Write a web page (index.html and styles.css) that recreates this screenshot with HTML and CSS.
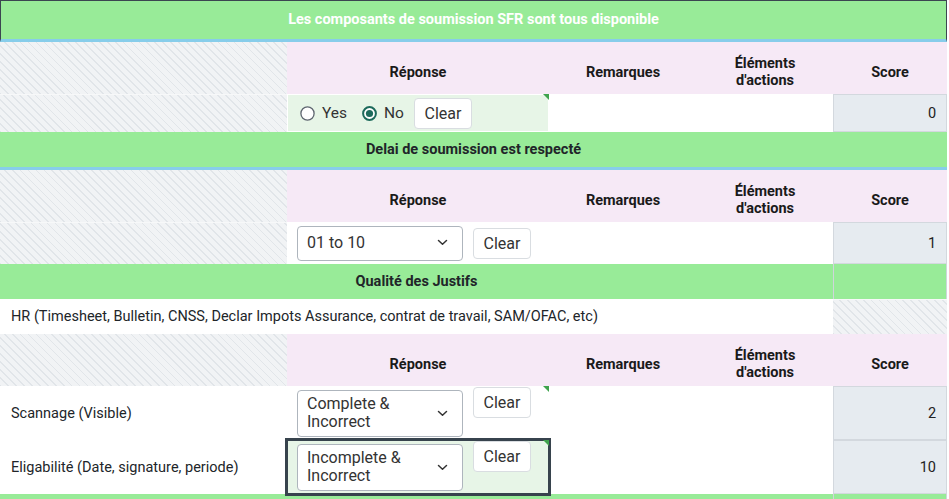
FILE: index.html
```html
<!DOCTYPE html>
<html lang="fr">
<head>
<meta charset="utf-8">
<title>Évaluation</title>
<link rel="stylesheet" href="styles.css">
</head>
<body>
<table class="grid">
  <colgroup>
    <col class="c1"><col class="c2"><col class="c3"><col class="c4"><col class="c5">
  </colgroup>
  <tbody>
    <tr class="r-top">
      <td colspan="5" class="sec sec-top">Les composants de soumission SFR sont tous disponible</td>
    </tr>
    <tr class="r-head">
      <td class="hatch"></td>
      <th>Réponse</th>
      <th>Remarques</th>
      <th>Éléments<br>d'actions</th>
      <th>Score</th>
    </tr>
    <tr class="r-yn">
      <td class="hatch"></td>
      <td class="resp filled flagged">
        <div class="ctrl ctrl-mid">
          <label class="radio">
            <svg width="15" height="15" viewBox="0 0 15 15"><circle cx="7.5" cy="7.5" r="6.6" fill="#fff" stroke="#5f6670" stroke-width="1.3"/></svg>
            <span>Yes</span>
          </label>
          <label class="radio radio-last">
            <svg width="15" height="15" viewBox="0 0 15 15"><circle cx="7.5" cy="7.5" r="6.4" fill="#fff" stroke="#1d6a5b" stroke-width="2"/><circle cx="7.5" cy="7.5" r="3.6" fill="#1d6a5b"/></svg>
            <span>No</span>
          </label>
          <button class="btn">Clear</button>
        </div>
      </td>
      <td></td>
      <td></td>
      <td class="score">0</td>
    </tr>
    <tr class="r-sec">
      <td colspan="5" class="sec sec-blue">Delai de soumission est respecté</td>
    </tr>
    <tr class="r-head">
      <td class="hatch"></td>
      <th>Réponse</th>
      <th>Remarques</th>
      <th>Éléments<br>d'actions</th>
      <th>Score</th>
    </tr>
    <tr class="r-data">
      <td class="hatch"></td>
      <td class="resp">
        <div class="ctrl ctrl-mid">
          <div class="select"><span class="sel-text">01 to 10</span><svg class="chev" width="11" height="7" viewBox="0 0 11 7"><path d="M1.5 1.5 L5.5 5.2 L9.5 1.5" fill="none" stroke="#333" stroke-width="1.5" stroke-linecap="round" stroke-linejoin="round"/></svg></div>
          <button class="btn">Clear</button>
        </div>
      </td>
      <td></td>
      <td></td>
      <td class="score">1</td>
    </tr>
    <tr class="r-sec3">
      <td colspan="4" class="sec">Qualité des Justifs</td>
      <td class="sec sec-score"></td>
    </tr>
    <tr class="r-hr">
      <td colspan="4" class="label">HR (Timesheet, Bulletin, CNSS, Declar Impots Assurance, contrat de travail, SAM/OFAC, etc)</td>
      <td class="hatch"></td>
    </tr>
    <tr class="r-head">
      <td class="hatch"></td>
      <th>Réponse</th>
      <th>Remarques</th>
      <th>Éléments<br>d'actions</th>
      <th>Score</th>
    </tr>
    <tr class="r-tall">
      <td class="label">Scannage (Visible)</td>
      <td class="resp flagged">
        <div class="ctrl ctrl-top">
          <div class="select"><span class="sel-text">Complete &amp; Incorrect</span><svg class="chev" width="11" height="7" viewBox="0 0 11 7"><path d="M1.5 1.5 L5.5 5.2 L9.5 1.5" fill="none" stroke="#333" stroke-width="1.5" stroke-linecap="round" stroke-linejoin="round"/></svg></div>
          <button class="btn">Clear</button>
        </div>
      </td>
      <td></td>
      <td></td>
      <td class="score">2</td>
    </tr>
    <tr class="r-tall2">
      <td class="label">Eligabilité (Date, signature, periode)</td>
      <td class="resp filled flagged focused">
        <div class="ctrl ctrl-top">
          <div class="select"><span class="sel-text">Incomplete &amp; Incorrect</span><svg class="chev" width="11" height="7" viewBox="0 0 11 7"><path d="M1.5 1.5 L5.5 5.2 L9.5 1.5" fill="none" stroke="#333" stroke-width="1.5" stroke-linecap="round" stroke-linejoin="round"/></svg></div>
          <button class="btn">Clear</button>
        </div>
      </td>
      <td></td>
      <td></td>
      <td class="score">10</td>
    </tr>
    <tr class="r-sec3">
      <td colspan="4" class="sec"></td>
      <td class="sec sec-score"></td>
    </tr>
  </tbody>
</table>
</body>
</html>
```

FILE: styles.css
```css
* { box-sizing: border-box; }

html, body {
  margin: 0;
  padding: 0;
  background: #fff;
}

body {
  font-family: Roboto, "Liberation Sans", Arial, sans-serif;
  font-size: 14.5px;
  color: #212529;
  overflow: hidden;
}

.grid {
  width: 947px;
  table-layout: fixed;
  border-collapse: separate;
  border-spacing: 0;
}

.c1 { width: 287px; }
.c2 { width: 262px; }
.c3 { width: 148px; }
.c4 { width: 136px; }
.c5 { width: 114px; }

td, th {
  padding: 0;
  vertical-align: middle;
}

/* row heights */
.r-top { height: 42px; }
.r-head { height: 52px; }
.r-yn { height: 38px; }
.r-sec { height: 38px; }
.r-data { height: 42px; }
.r-sec3 { height: 35px; }
.r-hr { height: 35px; }
.r-tall { height: 52px; }
.r-tall2 { height: 54px; }

/* section headers */
.sec {
  background: #98eb98;
  font-weight: 700;
  text-align: center;
  color: #212529;
}

.sec-top {
  color: #fff;
  border: 1px solid #3b4650;
  border-bottom: 3px solid #87cdea;
  padding-bottom: 1px;
}

.sec-blue {
  border-bottom: 3px solid #87cdea;
}

.sec-score {
  border-left: 1px solid #cfd5db;
  border-right: 1px solid #cfd5db;
}

/* column headers */
th {
  background: #f6e9f6;
  font-weight: 700;
  text-align: center;
  line-height: 17px;
  padding: 8px 4px 0;
  color: #1a1a1a;
}

/* hatched empty cells */
.hatch {
  background-color: #f1f3f5;
  background-image: repeating-linear-gradient(45deg, #e1e5e9 0 1.2px, #f1f3f5 1.2px 5.6px);
  border-top: 1px solid #f7f8f9;
}

.r-head .hatch { border-top: 0; }

td.label {
  padding-left: 11px;
  color: #212529;
}

/* response cell */
.resp {
  position: relative;
  border: 1px solid #fff;
  padding-left: 9px;
}

.resp.filled { background: #e7f5e7; }

.flagged::after {
  content: "";
  position: absolute;
  top: -1px;
  right: -1px;
  border-style: solid;
  border-width: 0 6px 6px 0;
  border-color: transparent #3fa34d transparent transparent;
}

.focused {
  outline: 3px solid #37434d;
  outline-offset: -1px;
}

.ctrl {
  display: flex;
  gap: 10px;
}

.ctrl-mid { align-items: center; }
.ctrl-top {
  align-items: flex-start;
  padding-bottom: 2px;
}
.ctrl-top .select { margin-top: 3px; }

.radio {
  display: flex;
  align-items: center;
  gap: 7px;
  font-size: 15.5px;
  color: #333;
  margin-left: 3px;
  margin-right: 3px;
}

.radio-last { margin-left: 2px; margin-right: 0; }

.radio svg { display: block; }

.btn {
  font-family: Roboto, "Liberation Sans", Arial, sans-serif;
  font-size: 16px;
  color: #333;
  background: #fff;
  border: 1px solid #d9dde1;
  border-radius: 4px;
  height: 31px;
  width: 58px;
  padding: 0;
  line-height: 29px;
}

.select {
  display: flex;
  align-items: center;
  width: 166px;
  min-height: 35px;
  border: 1px solid #aeb5bd;
  border-radius: 4px;
  background: #fff;
  padding: 4px 14px 5px 9px;
  font-size: 16px;
  line-height: 18px;
  color: #333;
}

.sel-text { flex: 1; padding-right: 10px; }

.chev { display: block; flex: none; }

/* score */
.score {
  background: #e6ebf0;
  border: 1px solid #d3d8de;
  text-align: right;
  padding-right: 10px;
  color: #222;
}
```
